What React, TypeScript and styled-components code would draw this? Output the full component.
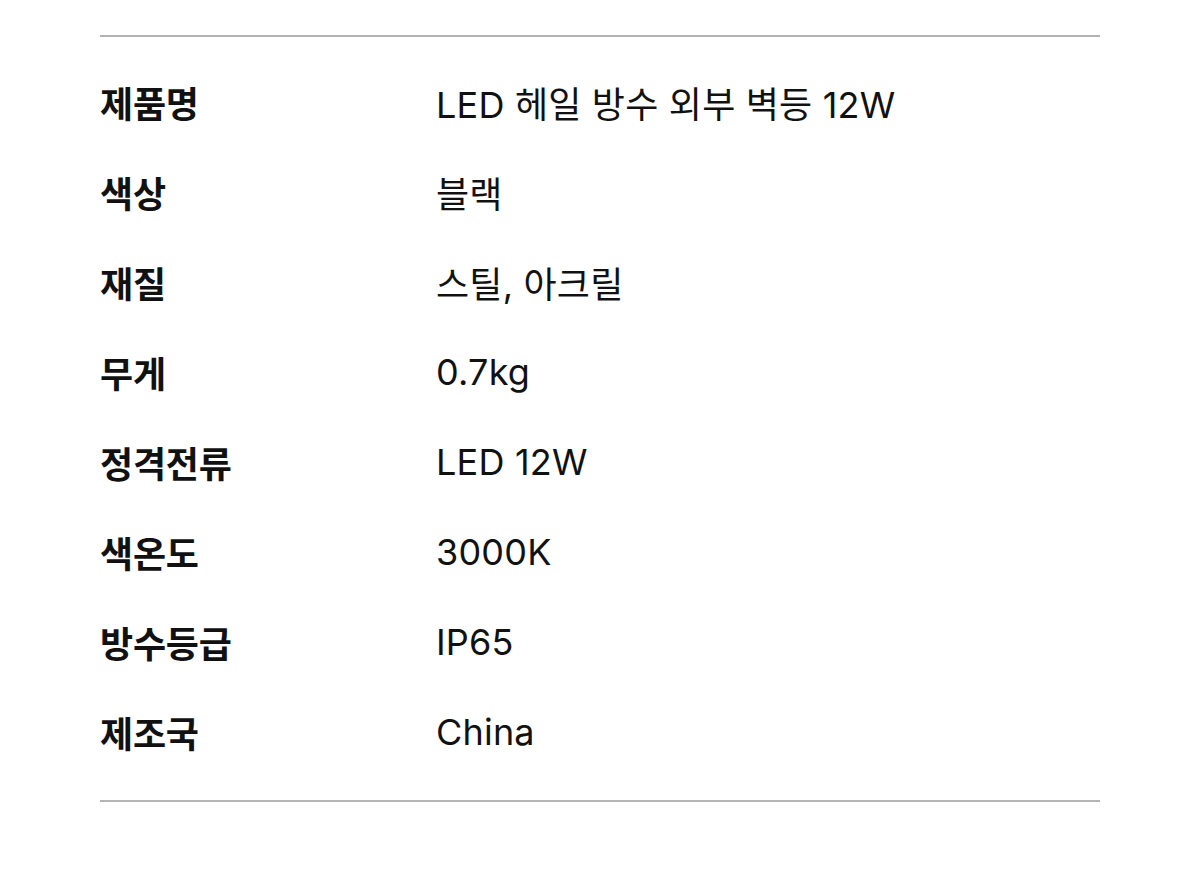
import React from "react";
import styled, { createGlobalStyle } from "styled-components";

const GlobalStyle = createGlobalStyle`
  html, body {
    margin: 0;
    padding: 0;
    background: #ffffff;
  }
  body {
    font-family: "Inter", "Noto Sans CJK KR", sans-serif;
    color: #111111;
  }
`;

const Wrapper = styled.div`
  padding: 35px 100px 0;
`;

const Table = styled.div`
  border-top: 2px solid #b3b3b3;
  border-bottom: 2px solid #b5b5b8;
  padding: 20px 0 23px;
`;

const Row = styled.div`
  display: grid;
  grid-template-columns: 336px 1fr;
  align-items: center;
  height: 90px;
`;

const Label = styled.div`
  font-size: 36px;
  font-weight: 600;
  letter-spacing: -0.2px;
`;

const Value = styled.div`
  font-size: 36px;
  font-weight: 400;
  letter-spacing: 0.2px;
`;

const specs: [string, string][] = [
  ["제품명", "LED 헤일 방수 외부 벽등 12W"],
  ["색상", "블랙"],
  ["재질", "스틸, 아크릴"],
  ["무게", "0.7kg"],
  ["정격전류", "LED 12W"],
  ["색온도", "3000K"],
  ["방수등급", "IP65"],
  ["제조국", "China"],
];

function App() {
  return (
    <Wrapper>
      <GlobalStyle />
      <Table>
        {specs.map(([label, value]) => (
          <Row key={label}>
            <Label>{label}</Label>
            <Value>{value}</Value>
          </Row>
        ))}
      </Table>
    </Wrapper>
  );
}

export default App;
